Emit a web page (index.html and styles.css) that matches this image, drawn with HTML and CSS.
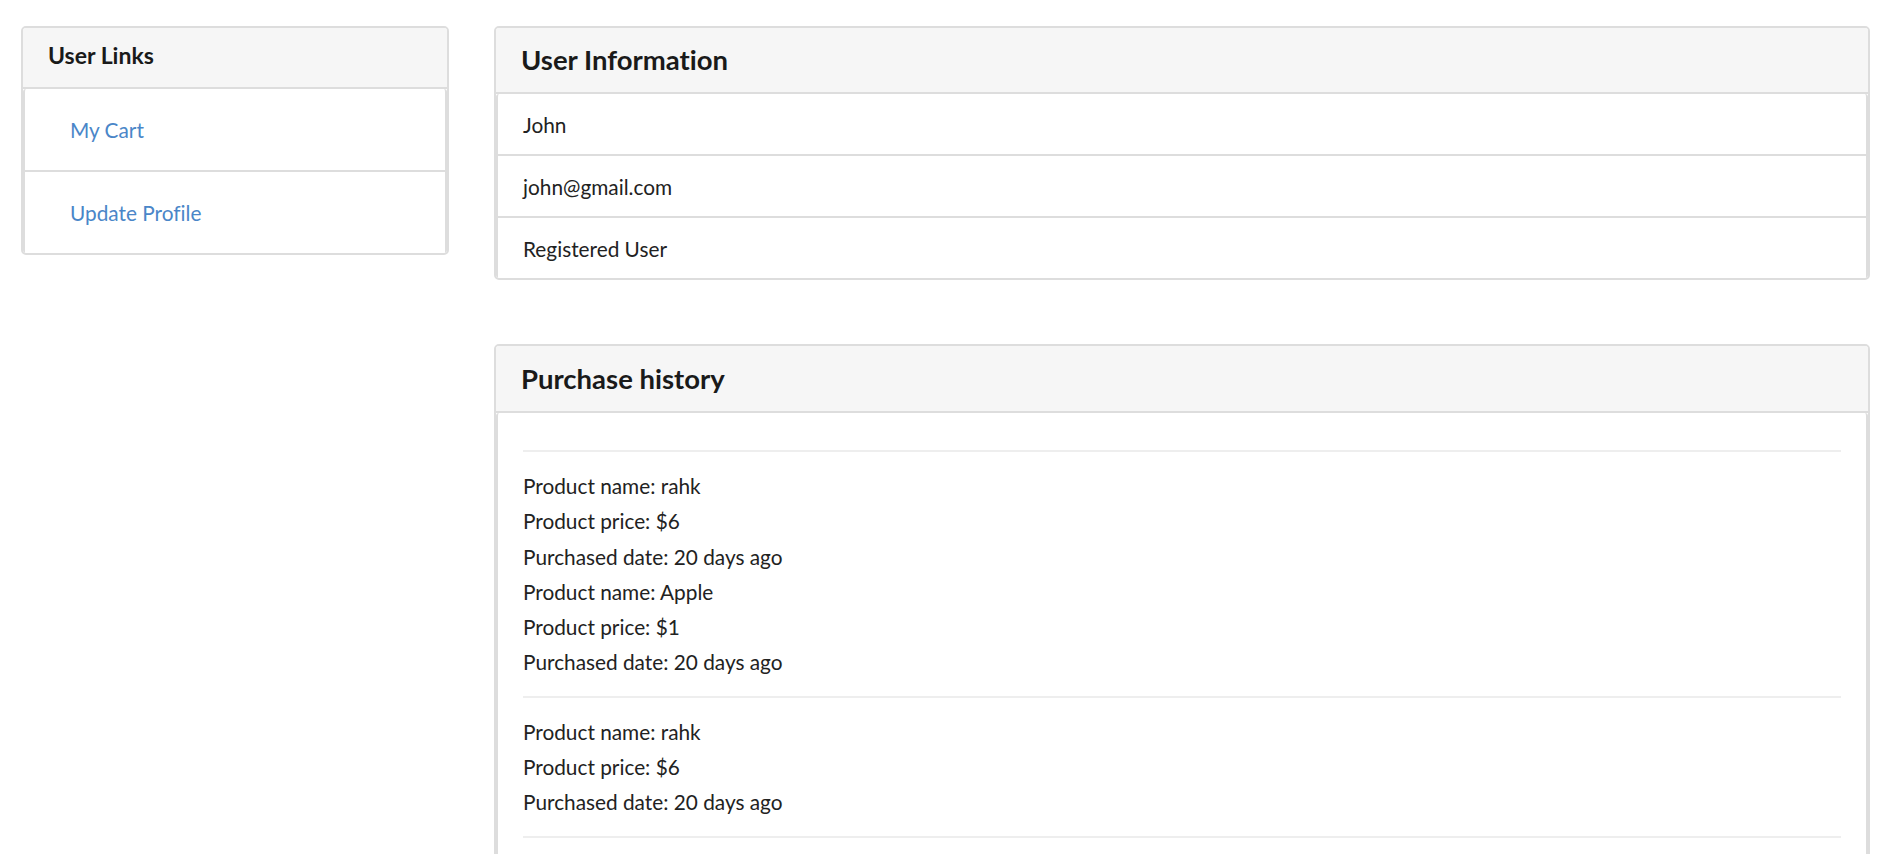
FILE: index.html
```html
<!DOCTYPE html>
<html lang="en">
<head>
<meta charset="utf-8">
<title>Profile</title>
<link rel="stylesheet" href="styles.css">
</head>
<body>
<div class="page">
  <aside class="side">
    <section class="panel">
      <div class="panel-heading links-heading"><h4 class="links-title">User Links</h4></div>
      <div class="panel-body">
        <a class="link-item" href="#">My Cart</a>
        <a class="link-item" href="#">Update Profile</a>
      </div>
    </section>
  </aside>
  <main class="main">
    <section class="panel">
      <div class="panel-heading info-heading"><h3 class="panel-title">User Information</h3></div>
      <div class="panel-body">
        <div class="info-row">John</div>
        <div class="info-row">john@gmail.com</div>
        <div class="info-row">Registered User</div>
      </div>
    </section>
    <section class="panel history">
      <div class="panel-heading history-heading"><h3 class="panel-title">Purchase history</h3></div>
      <div class="panel-body history-body">
        <div class="order">
          <div class="line">Product name: rahk</div>
          <div class="line">Product price: $6</div>
          <div class="line">Purchased date: 20 days ago</div>
          <div class="line">Product name: Apple</div>
          <div class="line">Product price: $1</div>
          <div class="line">Purchased date: 20 days ago</div>
        </div>
        <div class="order">
          <div class="line">Product name: rahk</div>
          <div class="line">Product price: $6</div>
          <div class="line">Purchased date: 20 days ago</div>
        </div>
        <div class="order last"></div>
      </div>
    </section>
  </main>
</div>
</body>
</html>
```
FILE: styles.css
```css
* { box-sizing: border-box; }
html, body { margin: 0; padding: 0; background: #fff; }
body {
  font-family: Lato, "Open Sans", "Liberation Sans", sans-serif;
  font-size: 20.8px;
  color: #222;
  font-variant-ligatures: none;
}
.page {
  display: grid;
  grid-template-columns: 428px 1376px;
  column-gap: 45px;
  padding: 26px 10px 0 21px;
  align-items: start;
}
.panel {
  border: 2px solid #dddddd;
  border-radius: 5px;
  background: #fff;
  overflow: hidden;
}
.panel-heading {
  background: #f6f6f6;
  border-bottom: 2px solid #dddddd;
  padding: 0 25px;
}
.links-heading { height: 61px; }
.links-title {
  margin: 0;
  font-size: 23px;
  font-weight: 700;
  line-height: 55px;
  color: #1a1a1a;
}
.info-heading { height: 66px; }
.history-heading { height: 67px; }
.panel-title {
  margin: 0;
  font-size: 27.5px;
  font-weight: 700;
  line-height: 64px;
  color: #1a1a1a;
}
.history-heading .panel-title { line-height: 65px; }
.panel-body {
  border-left: 2px solid #dddddd;
  border-right: 2px solid #dddddd;
  border-radius: 3px 3px 0 0;
  display: flex;
  flex-direction: column;
}
.link-item {
  display: block;
  height: 83px;
  line-height: 81px;
  padding: 0 45px;
  color: #4a86c8;
  text-decoration: none;
  border-bottom: 2px solid #dddddd;
}
.link-item:last-child { border-bottom: 0; height: 81px; }
.info-row {
  height: 62px;
  line-height: 58px;
  padding: 2px 25px 0;
  border-bottom: 2px solid #dddddd;
}
.info-row:last-child { border-bottom: 0; height: 60px; }
.history { margin-top: 64px; }
.history-body { padding: 37px 25px 0; }
.order {
  border-top: 2px solid #eeeeee;
  padding: 16px 0;
}
.order.last { padding: 0; height: 40px; }
.line { line-height: 35.3px; }
```
